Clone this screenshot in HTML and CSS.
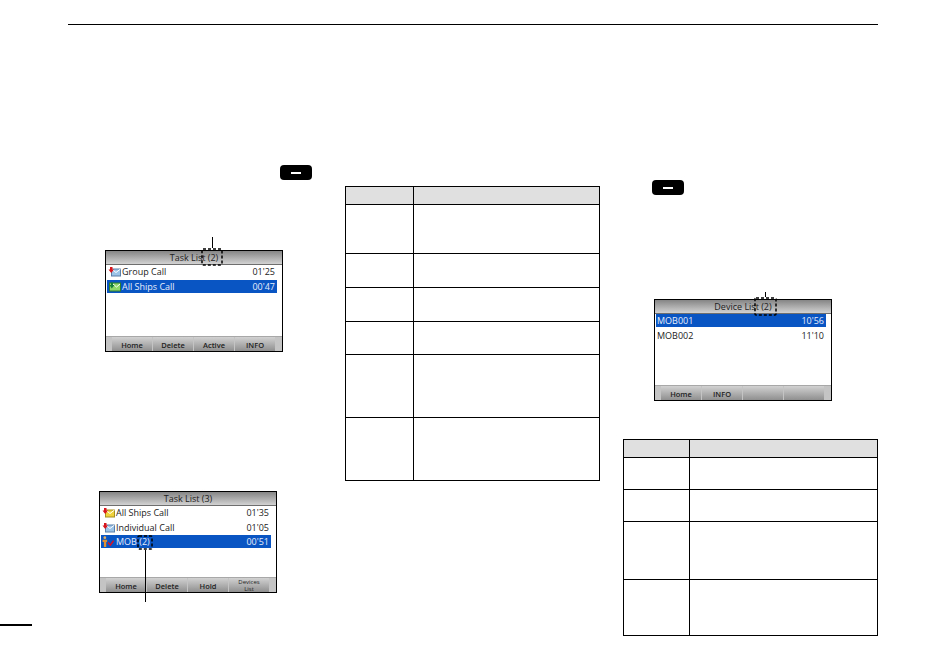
FILE: index.html
```html
<!DOCTYPE html>
<html lang="en">
  <head>
    <meta charset="UTF-8" />
    <title>Task List</title>
    <link rel="stylesheet" href="styles.css">
  </head>
  <body>
    <svg class="defs" width="0" height="0">
      <symbol id="mail-blue" viewBox="0 0 13 10">
        <rect x="3.500" y="2.500" width="9" height="7" fill="#9cc4e8" stroke="#5a7fa8" stroke-width="1" />
        <path d="M3.500 2.500l4.500 3.500 4.500-3.500" fill="none" stroke="#fff" stroke-width="1" />
        <path d="M.5 3H2V.5h2.500V3H6L3.200 6.500z" fill="#d8141c" />
      </symbol>
      <symbol id="mail-yellow" viewBox="0 0 13 10">
        <rect x="3.500" y="2.500" width="9" height="7" fill="#f0d23c" stroke="#a89020" stroke-width="1" />
        <path d="M3.500 2.500l4.500 3.500 4.500-3.500" fill="none" stroke="#fff" stroke-width="1" />
        <path d="M.5 3H2V.5h2.500V3H6L3.200 6.500z" fill="#d8141c" />
      </symbol>
      <symbol id="mail-green" viewBox="0 0 13 10">
        <rect x="1.500" y="1.500" width="11" height="8" fill="#8fd86a" stroke="#2f7d2f" stroke-width="1" />
        <path d="M5 2.500l3.500 3 3.500-3" fill="none" stroke="#fff" stroke-width="1" />
        <path d="M1.500 3.500H3V1h2v2.500h1.500L3.800 7z" fill="#17803a" />
      </symbol>
      <symbol id="mob" viewBox="0 0 13 12">
        <circle cx="2.500" cy="1.800" r="1.500" fill="#e8b060" />
        <path d="M0 4h5v2.500H4V12H1.500V6.500H0z" fill="#e09030" />
        <path d="M6 7l2.500 3L12 5" fill="none" stroke="#e01020" stroke-width="1.600" />
      </symbol>
    </svg>

    <div class="page">
      <div class="top-rule"></div>

      <div class="columns">
        <div class="col col-left">
          <div class="key key-left"><span></span></div>

          <div class="screen screen-one">
            <div class="leader leader-up"></div>
            <svg class="dash-box dash-one"><rect x="1" y="1" width="20" height="16" rx="1" /></svg>
            <div class="title">Task List (2)</div>
            <div class="rows">
              <div class="row">
                <svg class="ico"><use href="#mail-blue" /></svg>
                <span class="name">Group Call</span>
                <span>01'25</span>
              </div>
              <div class="row selected">
                <svg class="ico"><use href="#mail-green" /></svg>
                <span class="name">All Ships Call</span>
                <span>00'47</span>
              </div>
            </div>
            <div class="softkeys">
              <div class="sk">Home</div>
              <div class="sk">Delete</div>
              <div class="sk">Active</div>
              <div class="sk">INFO</div>
            </div>
          </div>

          <div class="screen screen-two">
            <svg class="dash-box dash-two"><rect x="1" y="1" width="14" height="13" rx="1" /></svg>
            <div class="leader leader-down"></div>
            <div class="title">Task List (3)</div>
            <div class="rows">
              <div class="row">
                <svg class="ico"><use href="#mail-yellow" /></svg>
                <span class="name">All Ships Call</span>
                <span>01'35</span>
              </div>
              <div class="row">
                <svg class="ico"><use href="#mail-blue" /></svg>
                <span class="name">Individual Call</span>
                <span>01'05</span>
              </div>
              <div class="row selected">
                <svg class="ico"><use href="#mob" /></svg>
                <span class="name">MOB (2)</span>
                <span>00'51</span>
              </div>
            </div>
            <div class="softkeys">
              <div class="sk">Home</div>
              <div class="sk">Delete</div>
              <div class="sk">Hold</div>
              <div class="sk sk-small">Devices<br />List</div>
            </div>
          </div>

          <div class="page-mark"></div>
        </div>

        <div class="col col-mid">
          <table class="info-table table-mid">
            <tr class="head"><td></td><td></td></tr>
            <tr class="r49"><td></td><td></td></tr>
            <tr class="r34"><td></td><td></td></tr>
            <tr class="r34"><td></td><td></td></tr>
            <tr class="r33"><td></td><td></td></tr>
            <tr class="r63"><td></td><td></td></tr>
            <tr class="r63"><td></td><td></td></tr>
          </table>
        </div>

        <div class="col col-right">
          <div class="key key-right"><span></span></div>

          <div class="screen screen-three">
            <div class="leader leader-up-short"></div>
            <svg class="dash-box dash-three"><rect x="1" y="1" width="21" height="17" rx="1" /></svg>
            <div class="title">Device List (2)</div>
            <div class="rows">
              <div class="row selected">
                <span class="name">MOB001</span>
                <span>10'56</span>
              </div>
              <div class="row">
                <span class="name">MOB002</span>
                <span>11'10</span>
              </div>
            </div>
            <div class="softkeys">
              <div class="sk">Home</div>
              <div class="sk">INFO</div>
              <div class="sk"></div>
              <div class="sk"></div>
            </div>
          </div>

          <table class="info-table table-right">
            <tr class="head"><td></td><td></td></tr>
            <tr class="r32"><td></td><td></td></tr>
            <tr class="r32"><td></td><td></td></tr>
            <tr class="r58"><td></td><td></td></tr>
            <tr class="r56"><td></td><td></td></tr>
          </table>
        </div>
      </div>
    </div>
  </body>
</html>
```

FILE: styles.css
```css
html,
body {
  margin: 0;
  background: #fff;
}
.defs {
  position: absolute;
}
.page {
  width: 950px;
  height: 670px;
  overflow: hidden;
  font-family: "Open Sans", "Noto Sans", sans-serif;
}
.top-rule {
  height: 1px;
  margin: 24px 72px 17px 68px;
  background: #000;
}
.columns {
  display: flex;
}
.col-left {
  width: 277px;
  margin-left: 68px;
}
.col-mid {
  width: 278px;
  padding-top: 144px;
}
.col-right {
  width: 255px;
}

/* keys */
.key {
  width: 32px;
  height: 15px;
  background: #000;
  border-radius: 4px;
  display: flex;
  align-items: center;
  justify-content: center;
}
.key span {
  width: 10px;
  height: 2px;
  background: #fff;
}
.key-left {
  margin: 123px 0 0 212px;
}
.key-right {
  margin: 138px 0 0 29px;
}

/* radio screens */
.screen {
  position: relative;
  width: 176px;
  height: 100px;
  border: 1px solid #000;
  background: #fff;
  display: flex;
  flex-direction: column;
  color: #222;
  font-size: 9px;
}
.screen-one {
  margin: 70px 0 0 37px;
}
.screen-two {
  margin: 139px 0 0 31px;
}
.screen-three {
  margin: 104px 0 0 31px;
}
.title {
  height: 13px;
  line-height: 13px;
  text-align: center;
  background: linear-gradient(#858585, #d2d2d2);
  border-bottom: 1px solid #6e6e6e;
}
.rows {
  flex: 1;
  padding: 0 5px 0 1px;
}
.row {
  display: flex;
  align-items: center;
  height: 13px;
  margin-bottom: 1.500px;
  padding: 0 2px 0 1px;
}
.row .name {
  flex: 1;
}
.ico {
  width: 13px;
  height: 11px;
  margin-right: 1px;
  flex: none;
}
.selected {
  background: #0a55c4;
  color: #e6eefb;
}
.softkeys {
  height: 14px;
  display: flex;
  padding: 0 5px 0 6px;
  background: #c4c4c4;
  border-top: 1px solid #a8a8a8;
}
.sk {
  width: 40px;
  margin-right: 1px;
  background: linear-gradient(#d2d2d2, #8f8f8f);
  text-align: center;
  font-size: 7.500px;
  font-weight: 600;
  line-height: 16px;
}
.sk:last-child {
  margin-right: 0;
}
.sk-small {
  font-size: 6px;
  font-weight: 400;
  line-height: 6.500px;
  padding-top: 1px;
}

/* dashed callouts on top of the screens */
.dash-box {
  position: absolute;
}
.dash-box rect {
  fill: none;
  stroke: #000;
  stroke-width: 1.500;
  stroke-dasharray: 3 2;
}
.dash-one {
  left: 95px;
  top: -3px;
  width: 22px;
  height: 18px;
}
.dash-two {
  left: 37px;
  top: 43px;
  width: 16px;
  height: 15px;
}
.dash-three {
  left: 99px;
  top: -3px;
  width: 23px;
  height: 19px;
}
.leader {
  position: absolute;
  width: 1px;
  background: #000;
}
.leader-up {
  left: 106px;
  top: -14px;
  height: 11px;
}
.leader-down {
  left: 45px;
  top: 58px;
  height: 52px;
}
.leader-up-short {
  left: 110px;
  top: -8px;
  height: 5px;
}
.page-mark {
  width: 32px;
  height: 2px;
  margin: 31px 0 0 -68px;
  background: #000;
}

/* empty tables */
.info-table {
  width: 255px;
  border-collapse: collapse;
  table-layout: fixed;
}
.info-table td {
  padding: 0;
  border: 1px solid #000;
}
.info-table td:first-child {
  width: 67px;
}
.table-right {
  margin-top: 38px;
}
.table-right td:first-child {
  width: 65px;
}
.head td {
  background: #dfe0df;
  height: 17px;
}
.r49 td { height: 48px; }
.r34 td { height: 33px; }
.r33 td { height: 32px; }
.r63 td { height: 62px; }
.r32 td { height: 31px; }
.r58 td { height: 57px; }
.r56 td { height: 55px; }
```
